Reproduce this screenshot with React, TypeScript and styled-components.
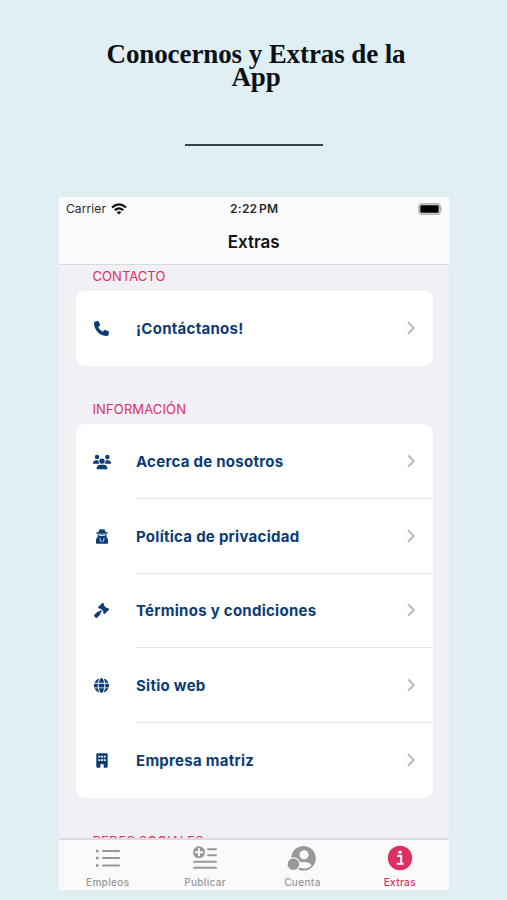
import React from 'react';
import styled, { createGlobalStyle } from 'styled-components';
import { FaPhone, FaUsers, FaGavel, FaGlobe } from 'react-icons/fa6';

const PINK = '#dc2f64';
const NAVY = '#0b3c75';

const Global = createGlobalStyle`
  * { box-sizing: border-box; }
  body { margin: 0; background: #e1eff4; font-family: Inter, "Liberation Sans", sans-serif; }
`;

const Page = styled.main`
  width: 507px;
  height: 900px;
  overflow: hidden;
  background: #e1eff4;
  display: flex;
  flex-direction: column;
`;

const Heading = styled.h1`
  margin: 43px 0 0 5px;
  height: 101px;
  text-align: center;
  font: 700 27px/23px "Liberation Serif", serif;
  letter-spacing: -0.1px;
  color: #0b1216;
`;

const Rule = styled.div`
  width: 138px;
  height: 2px;
  margin-left: 185px;
  background: #34454c;
`;

const Phone = styled.section`
  width: 389.5px;
  height: 693px;
  margin: 51px 0 0 59px;
  display: flex;
  flex-direction: column;
  background: #f1f0f5;
`;

const Header = styled.header`
  height: 68px;
  flex: none;
  background: #fbfafd;
  border-bottom: 1px solid #d9d8dd;
`;

const StatusBar = styled.div`
  height: 23px;
  padding: 0 6px 0 7px;
  display: grid;
  grid-template-columns: 1fr auto 1fr;
  align-items: center;
  font-size: 12px;
  color: #29292c;
`;

const Carrier = styled.span`
  display: flex;
  align-items: center;
  gap: 5px;
  letter-spacing: 0.1px;
`;

const Clock = styled.span`
  font-weight: 600;
  letter-spacing: 0.25px;
  word-spacing: -1.5px;
`;

const BatteryIcon = styled.svg`
  justify-self: end;
`;

const Title = styled.h2`
  margin: 9px 0 0;
  text-align: center;
  font-size: 17px;
  line-height: 26px;
  font-weight: 600;
  color: #111;
`;

const Content = styled.div`
  flex: 1;
  min-height: 0;
  overflow: hidden;
  padding: 0 16px 0 17px;
`;

const Label = styled.h3<{ $gap: number; $track: number }>`
  margin: ${(p) => p.$gap}px 0 6px 16.5px;
  font-size: 13px;
  line-height: 18px;
  font-weight: 400;
  letter-spacing: ${(p) => p.$track}px;
  color: ${PINK};
`;

const Card = styled.div`
  background: #fff;
  border-radius: 9px;
`;

const Row = styled.div`
  height: 74.7px;
  padding-left: 15px;
  display: flex;
  align-items: center;
  color: ${NAVY};
`;

const IconSlot = styled.span`
  width: 21px;
  margin-right: 24px;
  display: flex;
  justify-content: center;
`;

const RowBody = styled.div<{ $line: boolean }>`
  flex: 1;
  height: 100%;
  padding-right: 17px;
  display: flex;
  align-items: center;
  justify-content: space-between;
  border-bottom: ${(p) => (p.$line ? '1.5px solid #e7e7ea' : '0')};
`;

const RowText = styled.span`
  position: relative;
  top: 0.5px;
  font-size: 15px;
  font-weight: 650;
  letter-spacing: 0.27px;
`;

const TabBar = styled.nav`
  flex: none;
  height: 52px;
  display: grid;
  grid-template-columns: repeat(4, 1fr);
  border-top: 2px solid #dddde1;
  background: #fafafa;
`;

const Tab = styled.div<{ $active?: boolean }>`
  display: flex;
  flex-direction: column;
  align-items: center;
  padding-top: 5px;
  color: ${(p) => (p.$active ? PINK : '#989898')};
`;

const TabText = styled.span`
  margin-top: 4px;
  font-size: 10px;
  line-height: 14px;
  font-weight: 500;
  letter-spacing: 0.35px;
`;

const Chevron = () => (
  <svg width="9" height="14" viewBox="0 0 9 14" fill="none" stroke="#bcbcbf" strokeWidth="2">
    <path d="M1 1.2 6.9 7 1 12.8" />
  </svg>
);

const Wifi = () => (
  <svg width="16" height="12" viewBox="0 0 16 12" fill="none" stroke="#111" strokeWidth="2.2">
    <path d="M1 4.5Q8-1.8 15 4.5M3.7 7.3q4.3-3.8 8.6 0" />
    <path d="M8 11.5 5.6 9.2Q8 7.4 10.4 9.2Z" fill="#111" stroke="none" />
  </svg>
);

const Battery = () => (
  <BatteryIcon width="25" height="12" viewBox="0 0 25 12">
    <rect x="0.8" y="0.8" width="21.4" height="10.4" rx="2.8" fill="#ddd" stroke="#b5b5b8" strokeWidth="1.4" />
    <rect x="2.3" y="2.2" width="18.4" height="7.6" rx="1.2" fill="#000" />
    <path d="M23 3.6q2 2.4 0 4.8Z" fill="#aaa" />
  </BatteryIcon>
);

const Spy = () => (
  <svg width="14" height="15" viewBox="0 0 14 15" fill="currentColor">
    <path d="M4.4.4Q5.2-.2 7 .6 8.8-.2 9.6.4L10.7 3.3H12.6V4.7H1.4V3.3H3.3Z" />
    <path d="M2.6 5.4H11.4V8Q13 9 13 11V14Q13 14.8 12.2 14.8H1.8Q1 14.8 1 14V11Q1 9 2.6 8Z" />
    <path d="M4 6.5h6M4.6 9 6.2 13M9.4 9 7.8 13" fill="none" stroke="#fff" strokeWidth=".8" />
  </svg>
);

const Building = () => (
  <svg width="12" height="15" viewBox="0 0 12 15" fill="currentColor" fillRule="evenodd">
    <path d="M1.6.2h8.8q1.3 0 1.3 1.3v12q0 1.3-1.3 1.3H7.7v-2.6q0-1.5-1.7-1.5t-1.7 1.5v2.6H1.6Q.3 14.8.3 13.5v-12Q.3.2 1.6.2ZM2.4 2.8v1.8h1.8V2.8ZM5.1 2.8v1.8h1.8V2.8ZM7.8 2.8v1.8h1.8V2.8ZM2.4 6.2V8h1.8V6.2ZM5.1 6.2V8h1.8V6.2ZM7.8 6.2V8h1.8V6.2Z" />
  </svg>
);

const tabIcons = {
  list: (
    <svg width="28" height="26" viewBox="0 0 28 26" fill="none" stroke="currentColor" strokeWidth="2" strokeLinecap="round">
      <path d="M9 6h16M9 13h16M9 20.5h16" />
      <path d="M3.2 6h.1M3.2 13h.1M3.2 20.5h.1" strokeWidth="3" />
    </svg>
  ),
  publish: (
    <svg width="28" height="26" viewBox="0 0 28 26" fill="none" stroke="currentColor" strokeWidth="1.9" strokeLinecap="round">
      <circle cx="8" cy="7.2" r="6" fill="currentColor" stroke="none" />
      <path d="M8 3.8v6.8M4.6 7.2h6.8" stroke="#fafafa" />
      <path d="M17 4.2h8M17 10.3h8M3 16.7h22M3 22.7h22" />
    </svg>
  ),
  account: (
    <svg width="30" height="26" viewBox="0 0 30 26">
      <circle cx="16.5" cy="13.2" r="12.3" fill="currentColor" />
      <circle cx="17" cy="9.8" r="4.6" fill="#fafafa" />
      <path d="M9.4 21q1.8-4 7.6-4t7.6 3.2q-3.2 3.4-7.6 3.4t-7.6-2.6Z" fill="#fafafa" />
      <circle cx="6.4" cy="19.2" r="6.4" fill="currentColor" stroke="#fafafa" strokeWidth="1.2" />
    </svg>
  ),
  info: (
    <svg width="26" height="26" viewBox="0 0 26 26">
      <circle cx="13" cy="13" r="12.2" fill="currentColor" />
      <circle cx="13" cy="7.3" r="1.8" fill="#fff" />
      <path d="M10.2 11.1h4V18.5M9.8 18.8h6.8" fill="none" stroke="#fff" strokeWidth="2" />
    </svg>
  ),
};

const infoRows = [
  { text: 'Acerca de nosotros', icon: <FaUsers size={18} /> },
  { text: 'Política de privacidad', icon: <Spy /> },
  { text: 'Términos y condiciones', icon: <FaGavel size={15} /> },
  { text: 'Sitio web', icon: <FaGlobe size={15} /> },
  { text: 'Empresa matriz', icon: <Building /> },
];

type RowProps = { text: string; icon: React.ReactNode; line: boolean };

const ListRow = ({ text, icon, line }: RowProps) => (
  <Row>
    <IconSlot>{icon}</IconSlot>
    <RowBody $line={line}>
      <RowText>{text}</RowText>
      <Chevron />
    </RowBody>
  </Row>
);

export default function App() {
  return (
    <Page>
      <Global />
      <Heading>Conocernos y Extras de la<br />App</Heading>
      <Rule />
      <Phone>
        <Header>
          <StatusBar>
            <Carrier>Carrier <Wifi /></Carrier>
            <Clock>2:22 PM</Clock>
            <Battery />
          </StatusBar>
          <Title>Extras</Title>
        </Header>
        <Content>
          <Label $gap={2} $track={0.05}>CONTACTO</Label>
          <Card>
            <ListRow text="¡Contáctanos!" icon={<FaPhone size={15} />} line={false} />
          </Card>
          <Label $gap={34.5} $track={0.12}>INFORMACIÓN</Label>
          <Card>
            {infoRows.map((row, i) => (
              <ListRow key={row.text} {...row} line={i < infoRows.length - 1} />
            ))}
          </Card>
          <Label $gap={34} $track={0.15}>REDES SOCIALES</Label>
        </Content>
        <TabBar>
          <Tab>{tabIcons.list}<TabText>Empleos</TabText></Tab>
          <Tab>{tabIcons.publish}<TabText>Publicar</TabText></Tab>
          <Tab>{tabIcons.account}<TabText>Cuenta</TabText></Tab>
          <Tab $active>{tabIcons.info}<TabText>Extras</TabText></Tab>
        </TabBar>
      </Phone>
    </Page>
  );
}
